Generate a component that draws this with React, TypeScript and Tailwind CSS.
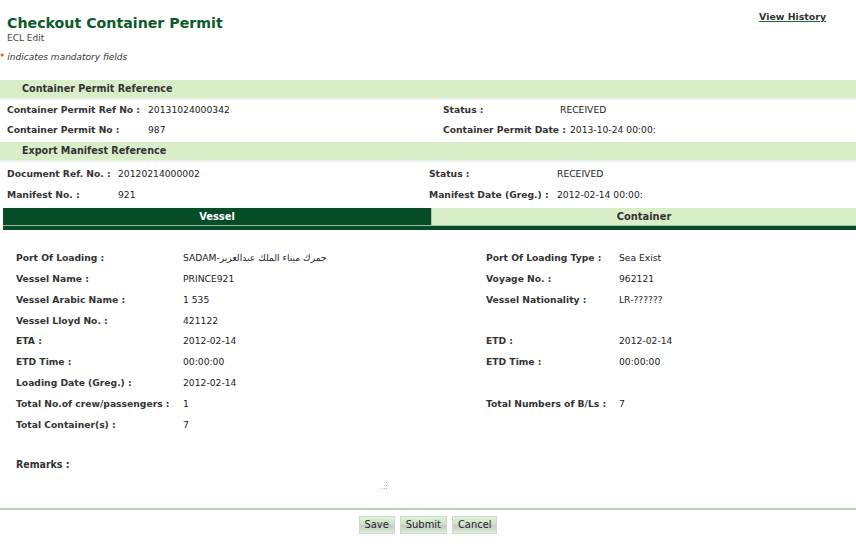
import React from 'react';

type Pair = { label: string; value?: string };

const narrow = "font-['Liberation_Sans_Narrow','DejaVu_Sans_Condensed',sans-serif]";

function SectionHeader({ title }: { title: string }) {
  return (
    <div className="h-[20px] border-b-2 border-[#eef2ec] bg-[#d8eec9] pl-[22px] text-[9.6px] font-bold leading-[18px] text-[#333]">
      {title}
    </div>
  );
}

function Cell({ item, labelW }: { item?: Pair; labelW: string }) {
  if (!item) return <div />;
  return (
    <div className="flex items-center whitespace-nowrap">
      <span className={`${labelW} shrink-0 pr-[4px] font-bold text-[#333]`}>{item.label}</span>
      <span className="text-[#222]">{item.value}</span>
    </div>
  );
}

const vesselRows: [Pair, Pair | undefined][] = [
  [{ label: 'Port Of Loading :', value: 'SADAM-جمرك ميناء الملك عبدالعزيز' }, { label: 'Port Of Loading Type :', value: 'Sea Exist' }],
  [{ label: 'Vessel Name :', value: 'PRINCE921' }, { label: 'Voyage No. :', value: '962121' }],
  [{ label: 'Vessel Arabic Name :', value: '1 535' }, { label: 'Vessel Nationality :', value: 'LR-??????' }],
  [{ label: 'Vessel Lloyd No. :', value: '421122' }, undefined],
  [{ label: 'ETA :', value: '2012-02-14' }, { label: 'ETD :', value: '2012-02-14' }],
  [{ label: 'ETD Time :', value: '00:00:00' }, { label: 'ETD Time :', value: '00:00:00' }],
  [{ label: 'Loading Date (Greg.) :', value: '2012-02-14' }, undefined],
  [{ label: 'Total No.of crew/passengers :', value: '1' }, { label: 'Total Numbers of B/Ls :', value: '7' }],
  [{ label: 'Total Container(s) :', value: '7' }, undefined],
];

export default function App() {
  return (
    <div className="h-[544px] w-[856px] overflow-hidden bg-white font-['DejaVu_Sans',Verdana,sans-serif] text-[9.2px] text-[#222]">
      {/* Title */}
      <div className="flex justify-between pl-[7px] pr-[30px] pt-[13px]">
        <div>
          <h1 className="text-[14.2px] font-bold leading-[20px] text-[#0b5a2b]">Checkout Container Permit</h1>
          <p className="text-[9px] leading-[11px] text-[#444]">ECL Edit</p>
        </div>
        <a className="mt-[-3px] text-[9.4px] font-bold text-[#333] underline decoration-[#1a6b3a]" href="#">
          View History
        </a>
      </div>
      <p className="mt-[7px] text-[9px] italic leading-[12px] text-[#333]">
        <span className="not-italic text-[#d00]">*</span> indicates mandatory fields
      </p>

      {/* Container Permit Reference */}
      <div className="mt-[17px]">
        <SectionHeader title="Container Permit Reference" />
        <div className="grid grid-cols-[436px_1fr] pl-[7px] leading-[20px]">
          <Cell item={{ label: 'Container Permit Ref No :', value: '20131024000342' }} labelW="min-w-[141px]" />
          <Cell item={{ label: 'Status :', value: 'RECEIVED' }} labelW="min-w-[117px]" />
          <Cell item={{ label: 'Container Permit No :', value: '987' }} labelW="min-w-[141px]" />
          <Cell item={{ label: 'Container Permit Date :', value: '2013-10-24 00:00:' }} labelW="min-w-[117px]" />
        </div>
        <div className="mt-[2px]">
          <SectionHeader title="Export Manifest Reference" />
        </div>
        <div className="grid grid-cols-[422px_1fr] pl-[7px] pt-[1px] leading-[21px]">
          <Cell item={{ label: 'Document Ref. No. :', value: '20120214000002' }} labelW="min-w-[111px]" />
          <Cell item={{ label: 'Status :', value: 'RECEIVED' }} labelW="min-w-[128px]" />
          <Cell item={{ label: 'Manifest No. :', value: '921' }} labelW="min-w-[111px]" />
          <Cell item={{ label: 'Manifest Date (Greg.) :', value: '2012-02-14 00:00:' }} labelW="min-w-[128px]" />
        </div>
      </div>

      {/* Tabs */}
      <div className="mt-[3px] pl-[3px]">
        <div className={`flex h-[17px] text-[11px] font-bold leading-[17px] ${narrow}`}>
          <div className="w-[428px] bg-[#064d27] text-center text-white">Vessel</div>
          <div className="w-[1px] bg-[#a8c8a0]" />
          <div className="flex-1 bg-[#d8eec9] text-center text-[#333]">Container</div>
        </div>
        <div className="h-[1px] bg-[#9cbfa4]" />
        <div className="h-[4px] bg-[#064d27]" />
      </div>

      {/* Vessel details */}
      <div className="grid grid-cols-[470px_1fr] pl-[16px] pt-[18px] leading-[20.85px]">
        {vesselRows.map(([l, r], i) => (
          <React.Fragment key={i}>
            <Cell item={l} labelW="min-w-[167px]" />
            {r ? <Cell item={r} labelW="min-w-[133px]" /> : <div className="h-[20.85px]" />}
          </React.Fragment>
        ))}
      </div>

      {/* Remarks */}
      <div className="pl-[16px] pt-[21px]">
        <div className={`text-[10.5px] font-bold leading-[14px] text-[#333] ${narrow}`}>Remarks :</div>
        <div className="ml-[362px] mt-[9px] h-[12px] w-[12px]">
          <svg width="12" height="12" viewBox="0 0 12 12">
            <g fill="#a9b9a9">
              <rect x="8" y="2" width="1" height="1" />
              <rect x="6" y="5" width="1" height="1" />
              <rect x="8" y="5" width="1" height="1" />
              <rect x="4" y="8" width="1" height="1" />
              <rect x="6" y="8" width="1" height="1" />
              <rect x="8" y="8" width="1" height="1" />
            </g>
          </svg>
        </div>
      </div>

      {/* Footer */}
      <div className="mt-[16px] h-[2px] bg-[#b9cbb5]" />
      <div className={`mt-[6px] flex justify-center gap-[5px] text-[11px] leading-[15px] text-[#222] ${narrow}`}>
        {['Save', 'Submit', 'Cancel'].map((b) => (
          <button
            key={b}
            type="button"
            className="h-[18px] border border-[#c9dcc4] bg-[linear-gradient(#dff1d8,#d0e0cc_45%,#c4cac4_55%,#dcefd6)] px-[5px]"
          >
            {b}
          </button>
        ))}
      </div>
    </div>
  );
}
